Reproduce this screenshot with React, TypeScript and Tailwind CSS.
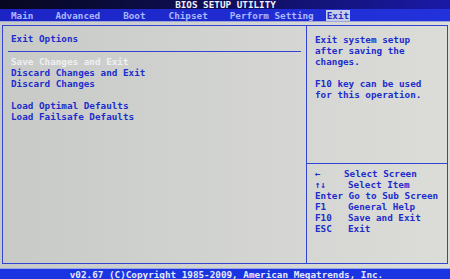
import React from 'react';

const keys: [string, string][] = [
    ['\u2190', 'Select Screen'],
    ['\u2191\u2193', 'Select Item'],
    ['Enter', 'Go to Sub Screen'],
    ['F1', 'General Help'],
    ['F10', 'Save and Exit'],
    ['ESC', 'Exit'],
];

export default function App() {
    return (
        <div className="w-[450px] h-[279px] flex flex-col overflow-hidden font-['DejaVu_Sans_Mono',monospace] font-bold text-[9.3px] leading-[11px] bg-[#cfd1cf]">
            {/* titulo */}
            <div className="h-[9px] flex justify-center items-center bg-gradient-to-r from-[#07071f] via-[#0e0e5a] to-[#1a1aa8] text-[#eef0ff] overflow-hidden">
                <span className="pl-[1px]">BIOS SETUP UTILITY</span>
            </div>

            {/* menu */}
            <div className="h-[13px] flex items-center bg-gradient-to-r from-[#1c24c4] to-[#2232dc] text-[#a9b8ff] border-b border-[#9ea4d8]">
                <span className="ml-[11px]">Main</span>
                <span className="ml-[22px]">Advanced</span>
                <span className="ml-[23px]">Boot</span>
                <span className="ml-[23px]">Chipset</span>
                <span className="ml-[22px]">Perform Setting</span>
                <span className="ml-[12px] px-[1px] bg-[#c9cce6] text-[#1b2bc8]">Exit</span>
            </div>

            {/* panel */}
            <div className="flex-1 px-[2px] pt-[3px] pb-[4px] bg-gradient-to-r from-[#c8cac8] to-[#dcddd9]">
                <div className="h-full flex border border-[#3344d0]">
                    <div className="w-[303px] flex flex-col text-[#1d2dcc]">
                        <div className="pt-[7px] pl-[8px]">Exit Options</div>
                        <div className="mt-[7px] ml-[5px] mr-[5px] h-px bg-[#3344d0]" />
                        <div className="pt-[4px] pl-[8px] flex flex-col">
                            <span className="text-[#eef0f4]">Save Changes and Exit</span>
                            <span>Discard Changes and Exit</span>
                            <span>Discard Changes</span>
                            <span>&nbsp;</span>
                            <span>Load Optimal Defaults</span>
                            <span>Load Failsafe Defaults</span>
                        </div>
                    </div>
                    <div className="w-px bg-[#3344d0]" />
                    <div className="flex-1 flex flex-col text-[#1d2dcc]">
                        <div className="h-[137px] pt-[8px] pl-[8px] flex flex-col">
                            <span>Exit system setup</span>
                            <span>after saving the</span>
                            <span>changes.</span>
                            <span>&nbsp;</span>
                            <span>F10 key can be used</span>
                            <span>for this operation.</span>
                        </div>
                        <div className="h-px bg-[#3344d0]" />
                        <div className="pt-[4px] pl-[8px] grid grid-cols-[33px_1fr]">
                            {keys.map(([k, d]) =>
                                k === 'Enter' ? (
                                    <span key={k} className="col-span-2 whitespace-pre">{'Enter ' + d}</span>
                                ) : (
                                    <React.Fragment key={k}>
                                        <span>{k}</span>
                                        <span className={k === '\u2190' ? 'ml-[-4px]' : ''}>{d}</span>
                                    </React.Fragment>
                                )
                            )}
                        </div>
                    </div>
                </div>
            </div>

            {/* pie */}
            <div className="h-[11px] flex justify-center items-center bg-[#1a34e2] text-[#e4e8ff] border-t border-[#9aa4e8]">
                <span className="pl-[3px]">v02.67 (C)Copyright 1985-2009, American Megatrends, Inc.</span>
            </div>
        </div>
    );
}
